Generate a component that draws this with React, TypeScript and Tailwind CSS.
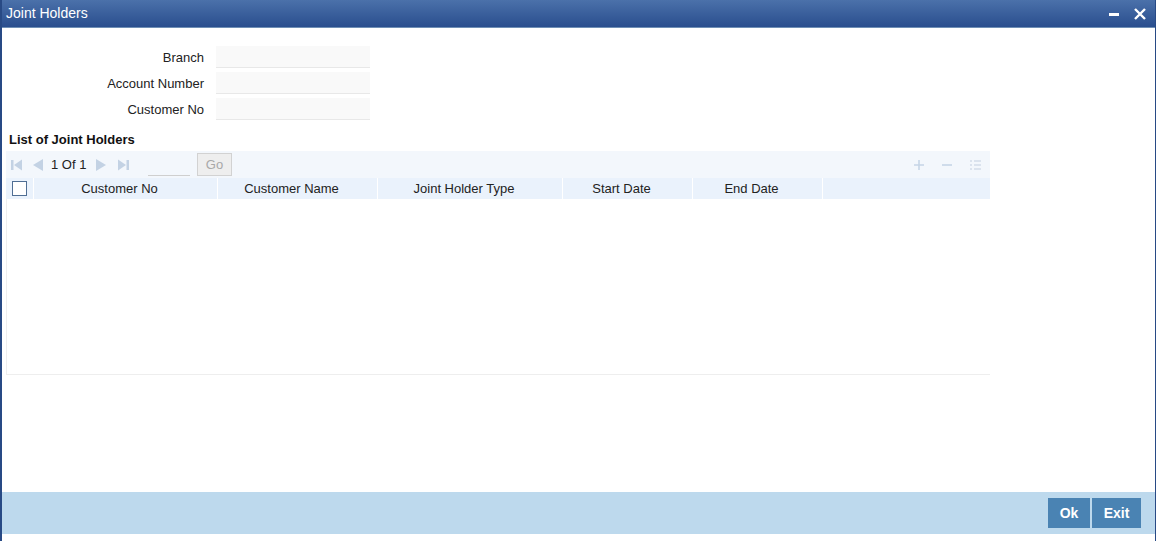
import React from "react";

const cols = [
  { label: "Customer No", w: 184 },
  { label: "Customer Name", w: 160 },
  { label: "Joint Holder Type", w: 185 },
  { label: "Start Date", w: 130 },
  { label: "End Date", w: 130 },
];

function Field({ label }: { label: string }) {
  return (
    <div className="flex items-center h-[26px]">
      <div className="w-[202px] text-right text-[13px] text-[#222] pt-[1px]">{label}</div>
      <div className="ml-[12px] w-[154px] h-[22px] bg-[#f9f9f9] border-b border-[#e8e8e8]" />
    </div>
  );
}

export default function App() {
  return (
    <div
      className="w-[1156px] h-[541px] flex flex-col bg-white border-l-2 border-r border-[#284a85] overflow-hidden"
      style={{ fontFamily: '"Liberation Sans", Arial, sans-serif' }}
    >
      {/* title bar */}
      <div className="h-[28px] shrink-0 flex items-center justify-between bg-gradient-to-b from-[#4b71aa] to-[#2a4e8e] border-b border-[#6f8fb5] pl-[4px] pr-[8px]">
        <span className="text-white text-[14px]">Joint Holders</span>
        <div className="flex items-center gap-[14px]">
          <div className="w-[10px] h-[3px] bg-white mt-[2px]" />
          <svg width="14" height="14" viewBox="0 0 14 14">
            <path d="M2 2 L12 12 M12 2 L2 12" stroke="white" strokeWidth="2.4" />
          </svg>
        </div>
      </div>

      {/* body */}
      <div className="flex-1 flex flex-col">
        <div className="pt-[16px] flex flex-col">
          <Field label="Branch" />
          <Field label="Account Number" />
          <Field label="Customer No" />
        </div>
        <div className="mt-[9px] pl-[7px] text-[13px] font-bold text-[#111] h-[18px] leading-[18px]">
          List of Joint Holders
        </div>
        <div className="ml-[4px] w-[984px] mt-[2px] flex flex-col">
          {/* toolbar */}
          <div className="h-[27px] bg-[#f3f7fc] flex items-center pl-[5px] pr-[8px]">
            <svg width="11" height="12" viewBox="0 0 11 12" className="mr-[10px]">
              <rect x="0" y="1" width="2.5" height="10" fill="#c3d2e4" />
              <path d="M11 0.5 L3 6 L11 11.5 Z" fill="#c3d2e4" />
            </svg>
            <svg width="11" height="12" viewBox="0 0 11 12" className="mr-[8px]">
              <path d="M11 0 L1 6 L11 12 Z" fill="#c3d2e4" />
            </svg>
            <span className="text-[13px] text-[#222] w-[37px] whitespace-pre">1 Of 1</span>
            <svg width="11" height="12" viewBox="0 0 11 12" className="ml-[8px] mr-[11px]">
              <path d="M0 0 L10 6 L0 12 Z" fill="#c3d2e4" />
            </svg>
            <svg width="11" height="12" viewBox="0 0 11 12">
              <path d="M0 0.5 L8 6 L0 11.5 Z" fill="#c3d2e4" />
              <rect x="8.5" y="1" width="2.5" height="10" fill="#c3d2e4" />
            </svg>
            <div className="ml-[19px] w-[42px] h-[22px] border-b border-[#cfcfcf]" />
            <div className="ml-[7px] w-[35px] h-[23px] bg-[#eeeeee] border border-[#d2d2d2] flex items-center justify-center text-[13px] text-[#a8a8a8]">
              Go
            </div>
            <div className="flex-1" />
            <div className="flex items-center gap-[16px]">
              <svg width="12" height="12" viewBox="0 0 12 12">
                <path d="M6 1 V11 M1 6 H11" stroke="#c6d5e6" strokeWidth="1.6" />
              </svg>
              <svg width="12" height="12" viewBox="0 0 12 12">
                <path d="M1 6 H11" stroke="#c6d5e6" strokeWidth="1.6" />
              </svg>
              <svg width="13" height="12" viewBox="0 0 13 12">
                <path d="M1 2 H3 M5 2 H12 M1 6 H3 M5 6 H12 M1 10 H3 M5 10 H12" stroke="#d3dde9" strokeWidth="1.6" />
              </svg>
            </div>
          </div>
          {/* header row */}
          <div className="h-[21px] bg-[#eaf2fc] flex items-stretch">
            <div className="w-[28px] flex items-center justify-center border-r border-white">
              <div className="w-[15px] h-[15px] border border-[#4f6e94] bg-white" />
            </div>
            {cols.map((c) => (
              <div
                key={c.label}
                style={{ width: c.w }}
                className="flex items-center justify-center border-r border-white text-[13px] text-[#222] pr-[12px]"
              >
                {c.label}
              </div>
            ))}
          </div>
          {/* body */}
          <div className="h-[176px] border-l border-b border-[#eeeeee]" />
        </div>
        <div className="flex-1" />
        {/* footer */}
        <div className="h-[42px] bg-[#bdd9ed] flex items-center justify-end pr-[14px] gap-[2px]">
          <div className="w-[42px] h-[30px] bg-[#4a83b3] text-white font-bold text-[14px] flex items-center justify-center">
            Ok
          </div>
          <div className="w-[49px] h-[30px] bg-[#4a83b3] text-white font-bold text-[14px] flex items-center justify-center">
            Exit
          </div>
        </div>
        <div className="h-[7px] bg-white" />
      </div>
    </div>
  );
}
